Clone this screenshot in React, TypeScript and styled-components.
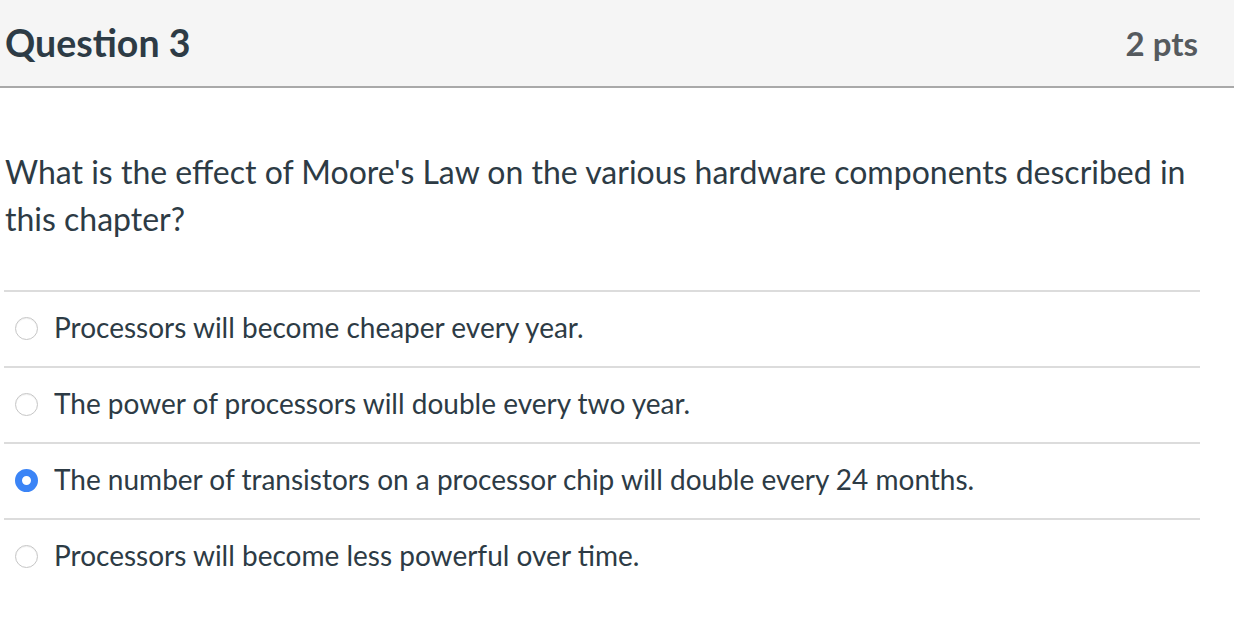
import React from "react";
import styled, { createGlobalStyle } from "styled-components";

const Global = createGlobalStyle`
  html, body { margin: 0; padding: 0; background: #ffffff; }
  body { font-family: Lato, "Open Sans", "Liberation Sans", sans-serif; color: #2d3b45; }
`;

const Page = styled.div`
  width: 1234px;
`;

const Header = styled.header`
  display: flex;
  align-items: center;
  justify-content: space-between;
  height: 86px;
  padding: 0 36px 0 5px;
  background: #f5f5f5;
  border-bottom: 2px solid #a9a9a9;
`;

const Title = styled.h2`
  margin: 0;
  font-size: 37.5px;
  font-weight: 700;
  color: #2d3b45;
  line-height: 1;
`;

const Points = styled.span`
  font-size: 33px;
  font-weight: 700;
  color: #555a5e;
  line-height: 1;
`;

const Body = styled.div`
  padding: 0 34px 0 4px;
`;

const Prompt = styled.p`
  margin: 0;
  padding: 60px 0 48px 1px;
  font-size: 32px;
  line-height: 47px;
  color: #2d3b45;
`;

const Answers = styled.div`
  display: flex;
  flex-direction: column;
`;

const Answer = styled.label`
  box-sizing: border-box;
  display: flex;
  align-items: center;
  gap: 16px;
  height: 76px;
  border-top: 2px solid #dcdcdc;
  padding: 0 0 5px 11px;
  font-size: 28px;
  color: #2d3b45;
`;

const Radio = styled.span<{ $checked?: boolean }>`
  box-sizing: border-box;
  width: 23px;
  height: 23px;
  margin-top: 3px;
  border-radius: 50%;
  flex: none;
  background: #ffffff;
  border: 1px solid #c6c6c6;
  box-shadow: inset 0 1px 1px rgba(0, 0, 0, 0.06);
  ${(p) =>
    p.$checked &&
    `
    background: #ffffff;
    border: 7.5px solid #3b84f6;
    box-shadow: none;
  `}
`;

const answers = [
  "Processors will become cheaper every year.",
  "The power of processors will double every two year.",
  "The number of transistors on a processor chip will double every 24 months.",
  "Processors will become less powerful over time.",
];

export default function App() {
  return (
    <Page>
      <Global />
      <Header>
        <Title>Question 3</Title>
        <Points>2 pts</Points>
      </Header>
      <Body>
        <Prompt>
          What is the effect of Moore's Law on the various hardware components described in this chapter?
        </Prompt>
        <Answers>
          {answers.map((a, i) => (
            <Answer key={i}>
              <Radio $checked={i === 2} />
              {a}
            </Answer>
          ))}
        </Answers>
      </Body>
    </Page>
  );
}
